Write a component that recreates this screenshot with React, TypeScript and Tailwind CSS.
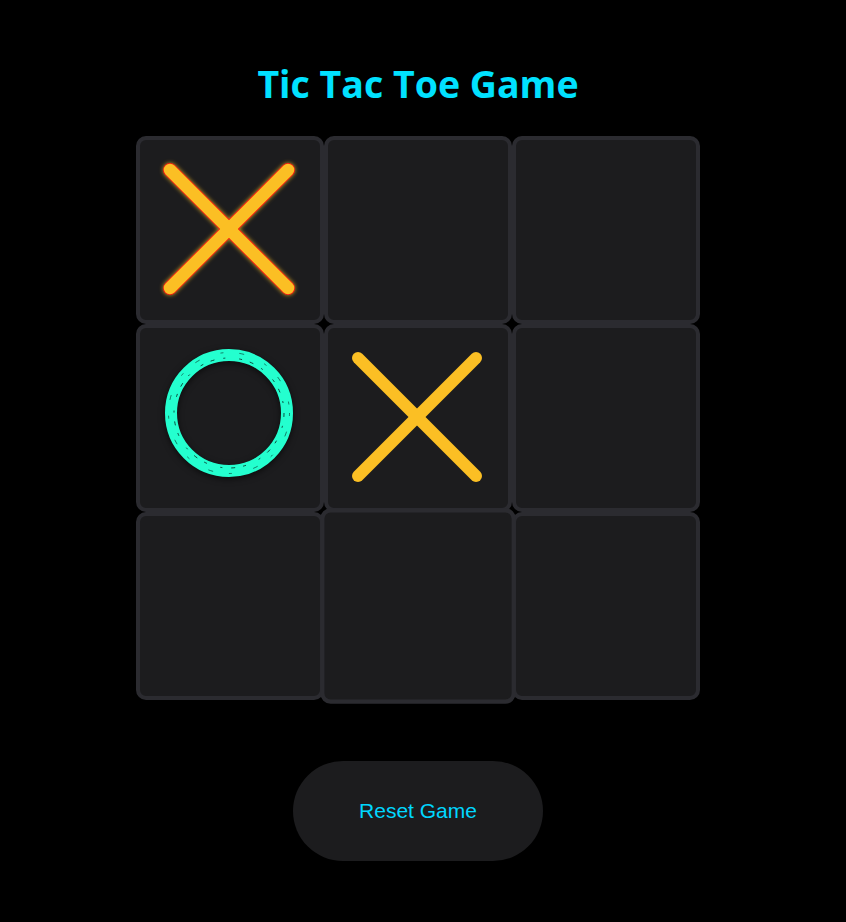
import { useState } from "react";

type Mark = "X" | "O" | null;

const XMark = ({ glow }: { glow?: boolean }) => (
  <svg viewBox="0 0 180 180" className="h-full w-full">
    {glow && (
      <g
        stroke="#ff1010"
        strokeWidth={14}
        strokeLinecap="round"
        style={{ filter: "drop-shadow(0 0 2px rgba(251,191,36,0.8))" }}
      >
        <line x1={30} y1={30} x2={148} y2={148} />
        <line x1={148} y1={30} x2={30} y2={148} />
      </g>
    )}
    <g stroke="#fbbf24" strokeWidth={glow ? 12.5 : 12} strokeLinecap="round">
      <line x1={30} y1={30} x2={148} y2={148} />
      <line x1={148} y1={30} x2={30} y2={148} />
    </g>
  </svg>
);

const OMark = () => (
  <svg viewBox="0 0 180 180" className="h-full w-full">
    <circle
      cx={89}
      cy={85}
      r={58}
      fill="none"
      stroke="#24ffcf"
      strokeWidth={12}
      style={{ filter: "drop-shadow(0 2px 3px rgba(0,0,0,0.6))" }}
    />
    <circle cx={89} cy={85} r={55} fill="none" stroke="#000" strokeWidth={0.7} strokeDasharray="4 9 2 14 3 8" />
    <circle cx={89} cy={85} r={60.5} fill="none" stroke="#000" strokeWidth={0.5} strokeDasharray="3 16 5 22" />
  </svg>
);

export default function App() {
  const [board, setBoard] = useState<Mark[]>(["X", null, null, "O", "X", null, null, null, null]);

  return (
    <div className="min-h-screen bg-black">
      <div className="flex flex-col items-center pr-[10px] pt-[58px]">
        <h1
          className="text-[37.5px] font-bold leading-[52px] text-[#00e1ff]"
          style={{ fontFamily: '"Open Sans", "Noto Sans", sans-serif' }}
        >
          Tic Tac Toe Game
        </h1>
        <div className="mt-[26px] grid grid-cols-[repeat(3,188px)] grid-rows-[repeat(3,188px)]">
          {board.map((cell, i) => (
            <button
              key={i}
              onClick={() => {
                if (cell) return;
                const next = [...board];
                next[i] = board.filter(Boolean).length % 2 === 0 ? "X" : "O";
                setBoard(next);
              }}
              className={`rounded-[10px] border-4 border-[#2b2b30] bg-[#1c1c1e] p-0 ${
                i === 7 ? "scale-[1.04]" : ""
              }`}
            >
              {cell === "X" && <XMark glow={i === 0} />}
              {cell === "O" && <OMark />}
            </button>
          ))}
        </div>
        <button
          onClick={() => setBoard(Array(9).fill(null))}
          className="mt-[61px] h-[100px] w-[250px] rounded-full bg-[#1c1c1e] text-[21px] text-[#00d7ff]"
          style={{ fontFamily: '"Liberation Sans", Arial, sans-serif' }}
        >
          Reset Game
        </button>
      </div>
    </div>
  );
}
